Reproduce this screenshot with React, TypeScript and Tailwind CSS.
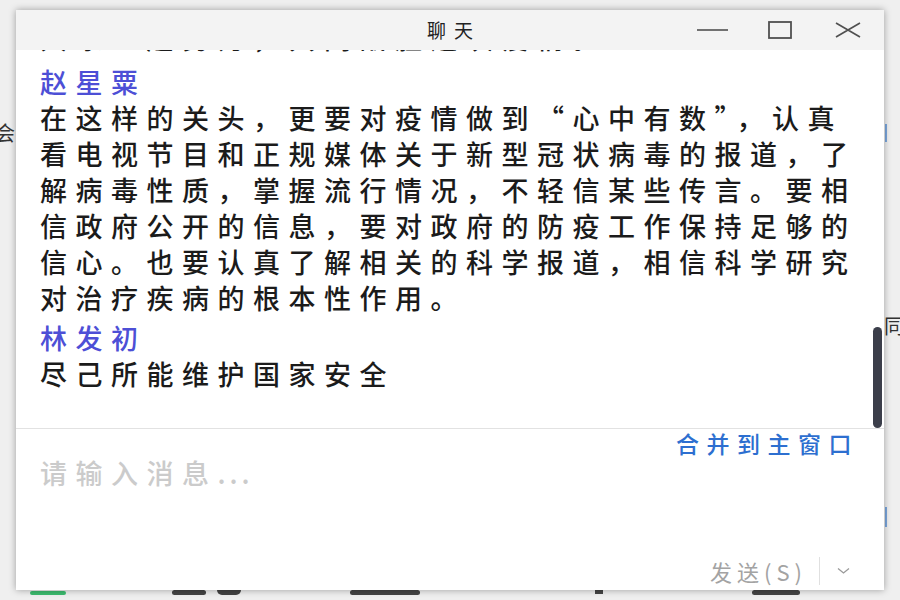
export default function App() {
  return (
    <div className="relative w-[900px] h-[600px] overflow-hidden bg-[#efefef] font-['Noto_Sans_CJK_SC',sans-serif]">
      {/* bits of the main window behind the popup */}
      <span className="absolute left-[-5px] top-[119px] text-[20px] leading-[28px] text-[#333]">会</span>
      <span className="absolute left-[884px] top-[312px] text-[20px] leading-[28px] text-[#333]">同</span>
      <span className="absolute left-[885px] top-[124px] w-[2px] h-[18px] bg-[#7aa6dc]" />
      <span className="absolute left-[885px] top-[507px] w-[2px] h-[20px] bg-[#7aa6dc]" />
      <span className="absolute left-[30px] top-[591px] w-[36px] h-[4px] rounded-sm bg-[#3dbb6f]" />
      <span className="absolute left-[172px] top-[590px] w-[34px] h-[5px] rounded-sm bg-[#444]" />
      <span className="absolute left-[217px] top-[590px] w-[24px] h-[5px] rounded-b-full bg-[#444]" />
      <span className="absolute left-[350px] top-[590px] w-[70px] h-[5px] rounded-sm bg-[#444]" />
      <span className="absolute left-[595px] top-[590px] w-[8px] h-[4px] bg-[#444]" />
      <span className="absolute left-[752px] top-[590px] w-[48px] h-[5px] rounded-sm bg-[#444]" />

      <div className="pt-[10px] pl-[16px]">
        <div className="relative flex flex-col w-[868px] h-[580px] bg-white shadow-[0_0_7px_rgba(0,0,0,0.35)]">
          {/* title bar */}
          <div className="grid grid-cols-[1fr_auto_1fr] items-center h-[40px] bg-[#f3f3f3]">
            <div />
            <div className="pl-[8px] text-[19px] leading-[24px] tracking-[8px] text-[#222]">聊天</div>
            <div className="flex justify-end pr-[2px]">
              <button className="flex items-center justify-center w-[68px] h-[40px]">
                <svg width="31" height="4" viewBox="0 0 31 4">
                  <line x1="0" y1="2" x2="31" y2="2" stroke="#505050" strokeWidth="1.6" />
                </svg>
              </button>
              <button className="flex items-center justify-center w-[68px] h-[40px]">
                <svg width="24" height="18" viewBox="0 0 24 18">
                  <rect x="1" y="1" width="22" height="16" fill="none" stroke="#505050" strokeWidth="1.8" />
                </svg>
              </button>
              <button className="flex items-center justify-center w-[68px] h-[40px]">
                <svg width="26" height="16" viewBox="0 0 26 16">
                  <path d="M1 1 L25 15 M25 1 L1 15" stroke="#505050" strokeWidth="1.7" fill="none" />
                </svg>
              </button>
            </div>
          </div>

          {/* message list */}
          <div className="relative h-[378px] overflow-hidden">
            <div className="px-[24px] text-[27px] leading-[36px] tracking-[8.5px] font-medium text-[#1b1b1b]">
              <p className="-mt-[30px] w-[820px]">大家一起努力，共同战胜这次疫情。</p>
              <div className="mt-[8px] w-[820px]">
                <p className="text-[#4d4fd6]">赵星粟</p>
                <p>
                  在这样的关头，更要对疫情做到<span className="[font-feature-settings:'fwid']">“</span>心中有数<span className="[font-feature-settings:'fwid']">”</span>，认真看电视节目和正规媒体关于新型冠状病毒的报道，了解病毒性质，掌握流行情况，不轻信某些传言。要相信政府公开的信息，要对政府的防疫工作保持足够的信心。也要认真了解相关的科学报道，相信科学研究对治疗疾病的根本性作用。
                </p>
              </div>
              <div className="mt-[4px] w-[820px]">
                <p className="text-[#4d4fd6]">林发初</p>
                <p>尽己所能维护国家安全</p>
              </div>
            </div>
            <div className="absolute right-[2px] bottom-0 w-[9px] h-[101px] rounded-full bg-[#3b3e4a]" />
          </div>

          {/* input area */}
          <div className="flex flex-col flex-1 border-t border-[#e2e2e2]">
            <div className="flex justify-end h-[26px] pt-[1px] pr-[25px]">
              <span className="text-[23px] leading-[26px] tracking-[7.5px] font-medium text-[#2d6fd0]">合并到主窗口</span>
            </div>
            <div className="px-[24px] text-[27px] leading-[36px] tracking-[8.5px] font-medium text-[#cbcbcb]">
              请输入消息<span className="tracking-[4px]">...</span>
            </div>
            <div className="mt-auto flex items-center justify-end h-[32px] pr-[34px] mb-[3px]">
              <span className="text-[22px] leading-[26px] tracking-[5px] text-[#a3a3a3]">发送(S)</span>
              <span className="ml-[12px] w-px h-[28px] bg-[#e0e0e0]" />
              <svg className="ml-[17px]" width="13" height="8" viewBox="0 0 13 8">
                <path d="M1 1.5 L6.5 6 L12 1.5" stroke="#9a9a9a" strokeWidth="1.3" fill="none" />
              </svg>
            </div>
          </div>
        </div>
      </div>
    </div>
  );
}
